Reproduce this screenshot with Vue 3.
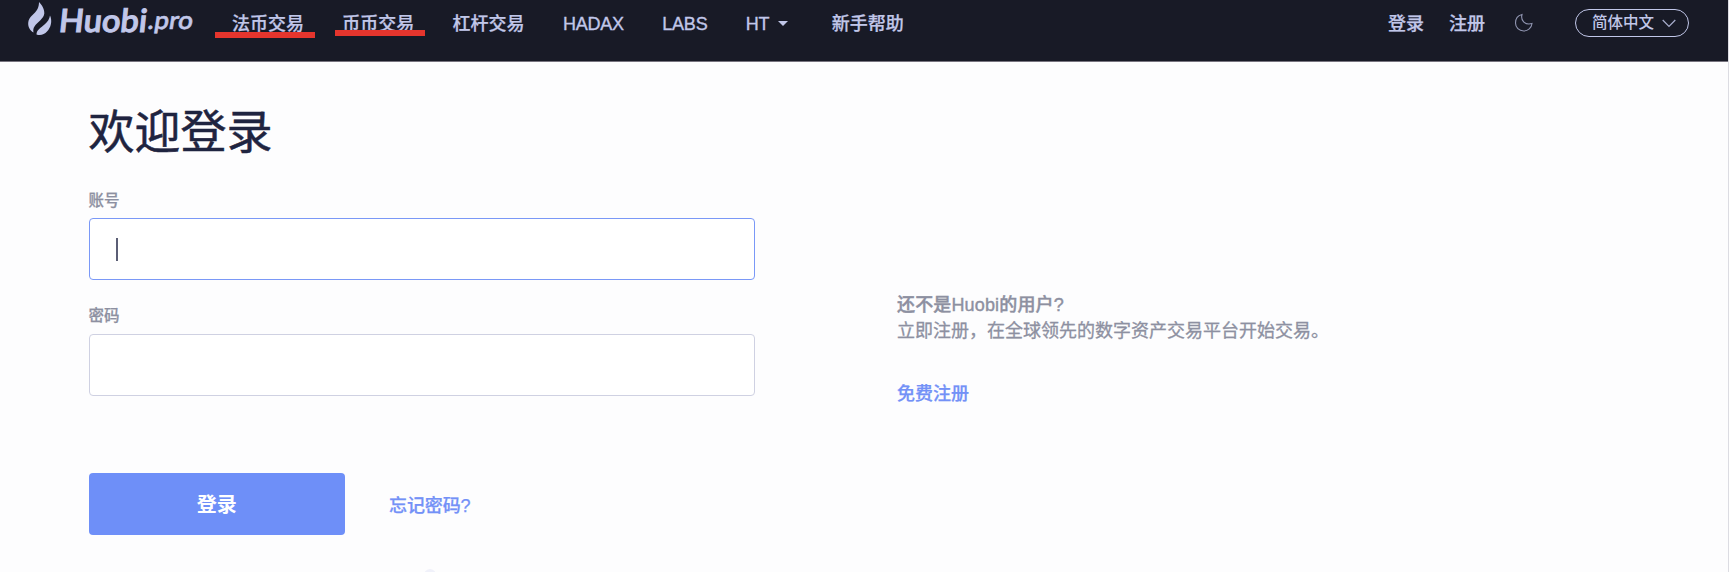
<script setup>
const nav = [
  { label: '法币交易', mark: 'first' },
  { label: '币币交易', mark: 'second' },
  { label: '杠杆交易' },
  { label: 'HADAX', latin: true },
  { label: 'LABS', latin: true },
  { label: 'HT', latin: true, caret: true },
  { label: '新手帮助' },
]
</script>

<template>
  <div class="page">
    <header class="header">
      <svg class="logo" width="170" height="40" viewBox="0 0 170 40">
        <path d="M15 2C18 5 20.500 9 20.300 13.500C20 18.500 13.500 22 10.500 26.500C9.300 28.300 9 30 9.500 32.500C6 30.500 4 27 4.200 23C4.500 16.500 11 14 13.500 9C14.700 6.500 15 4.500 15 2Z" />
        <path d="M26 15.500C28.500 21 27 27.500 23 31.500C20.500 34.500 16.500 35.800 12.500 34.500C12.500 30 16.500 28 20.500 24.500C23.500 22 25.500 19 26 15.500Z" />
        <g transform="translate(34 32) skewX(-6)">
          <text class="brand" x="0" y="0" textLength="88" lengthAdjust="spacingAndGlyphs">Huobi</text>
        </g>
        <g transform="translate(123 29) skewX(-9)">
          <text class="suffix" x="0" y="0" textLength="45" lengthAdjust="spacingAndGlyphs">.pro</text>
        </g>
      </svg>
      <nav class="nav">
        <a v-for="item in nav" :key="item.label" class="item" :class="{ latin: item.latin, menu: item.caret }">
          {{ item.label }}
          <i v-if="item.caret" class="caret"></i>
          <i v-if="item.mark" class="mark" :class="item.mark"></i>
        </a>
      </nav>
      <div class="tools">
        <a class="item">登录</a>
        <a class="item">注册</a>
        <svg class="moon" width="20" height="20" viewBox="0 0 20 20">
          <path d="M8 1.500C6.500 7 10.500 12.500 18 10.500C17.500 15 14 18 9.700 18C5 18 1.500 14.500 1.500 10C1.500 6 4 2.500 8 1.500Z" />
        </svg>
        <div class="lang">
          <span>简体中文</span>
          <svg width="14" height="9" viewBox="0 0 14 9"><path d="M.7 1L7 7.500L13.300 1" /></svg>
        </div>
      </div>
    </header>
    <main class="main">
      <section class="form">
        <h1>欢迎登录</h1>
        <label>账号</label>
        <div class="field active"><i class="cursor"></i></div>
        <label class="second-label">密码</label>
        <div class="field"></div>
        <div class="actions">
          <button>登录</button>
          <a>忘记密码?</a>
        </div>
      </section>
      <aside class="aside">
        <p class="question">还不是Huobi的用户?</p>
        <p>立即注册，在全球领先的数字资产交易平台开始交易。</p>
        <a>免费注册</a>
      </aside>
    </main>
    <i class="dot"></i>
  </div>
</template>

<style>
body { margin: 0; overflow: hidden; }
</style>

<style scoped>
.page {
  position: relative;
  box-sizing: border-box;
  width: 1729px;
  height: 572px;
  overflow: hidden;
  background: #fdfdfe;
  border-right: 1px solid #dcdce2;
  font-family: "Liberation Sans", "Noto Sans CJK SC", sans-serif;
}
.header {
  box-sizing: border-box;
  display: flex;
  height: 62px;
  padding-left: 24px;
  background: #181a26;
  border-bottom: 1px solid #77747f;
  color: #c1c7e9;
}
.logo { flex: none; fill: #c1c7e9; }
.brand { font: 600 32px Lato, sans-serif; stroke: #c1c7e9; stroke-width: 1; }
.suffix { font: 600 25px Lato, sans-serif; stroke: #c1c7e9; stroke-width: 0.500; }
.nav { display: flex; gap: 38.300px; margin-left: 38px; }
.item {
  position: relative;
  display: flex;
  align-items: center;
  box-sizing: border-box;
  height: 46px;
  padding-top: 1px;
  font-size: 18px;
  font-weight: 500;
  line-height: 26px;
  white-space: nowrap;
  -webkit-text-stroke: 0.250px #c1c7e9;
}
.latin { letter-spacing: -0.200px; -webkit-text-stroke: 0.350px #c1c7e9; }
.menu { margin-right: 5px; }
.caret {
  margin-left: 9px;
  border: 5px solid transparent;
  border-top-color: #c1c7e9;
  border-bottom: 0;
}
.mark { position: absolute; background: #e5352d; height: 6px; }
.first { left: -17px; top: 32px; width: 100px; }
.second { left: -7px; top: 30px; width: 90px; }
.tools { display: flex; align-items: center; height: 46px; margin-left: auto; margin-right: 39px; }
.tools .item + .item { margin-left: 25px; }
.moon { margin-left: 29px; fill: none; stroke: #9196b2; stroke-width: 1.100; }
.lang {
  box-sizing: border-box;
  display: flex;
  align-items: center;
  gap: 8px;
  width: 114px;
  height: 28px;
  margin-left: 41px;
  padding-left: 16px;
  border: 1px solid #c1c7e9;
  border-radius: 14px;
  font-size: 15.500px;
  font-weight: 500;
  line-height: 22px;
}
.lang svg { fill: none; stroke: #a9afce; stroke-width: 1.200; }
.main { display: flex; padding-left: 88.500px; }
.form { width: 666.500px; }
h1 {
  margin: 40px 0 0;
  font-size: 46px;
  font-weight: 400;
  line-height: 60px;
  color: #1f2440;
  -webkit-text-stroke: 0.500px #1f2440;
}
label {
  display: block;
  margin-top: 27px;
  height: 24px;
  font-size: 15.500px;
  font-weight: 500;
  line-height: 24px;
  color: #8d90a1;
  -webkit-text-stroke: 0.250px #8d90a1;
}
.second-label { margin-top: 24px; }
.field {
  box-sizing: border-box;
  display: flex;
  align-items: center;
  height: 62px;
  margin-top: 5px;
  padding-left: 26px;
  border: 1.500px solid #cfd1e2;
  border-radius: 4px;
  background: #fff;
}
.second-label + .field { margin-top: 6px; }
.field.active { border-color: #7a98f7; }
.cursor { width: 2px; height: 23px; background: #5b5e75; }
.actions { display: flex; align-items: center; margin-top: 77px; }
button {
  width: 256.500px;
  height: 62px;
  padding: 0 0 2px;
  border: 0;
  border-radius: 4px;
  background: #6e8ff8;
  color: #fff;
  font: 700 20px "Liberation Sans", "Noto Sans CJK SC", sans-serif;
}
.actions a, .aside a {
  font-size: 18px;
  font-weight: 500;
  line-height: 26px;
  color: #7391f7;
  -webkit-text-stroke: 0.250px #7391f7;
}
.actions a { margin-left: 44px; padding-top: 3px; letter-spacing: -0.100px; }
.aside { margin-left: 142px; padding-top: 230px; color: #8d90a1; }
.aside p { margin: 0; font-size: 18px; line-height: 26px; white-space: nowrap; -webkit-text-stroke: 0.300px #8d90a1; }
.aside .question { font-weight: 500; letter-spacing: 0.150px; -webkit-text-stroke-width: 0.400px; }
.aside a { display: block; margin-top: 37px; }
.dot { position: absolute; left: 424px; top: 569px; width: 12px; height: 12px; border-radius: 50%; background: #f0f1fa; }
</style>
